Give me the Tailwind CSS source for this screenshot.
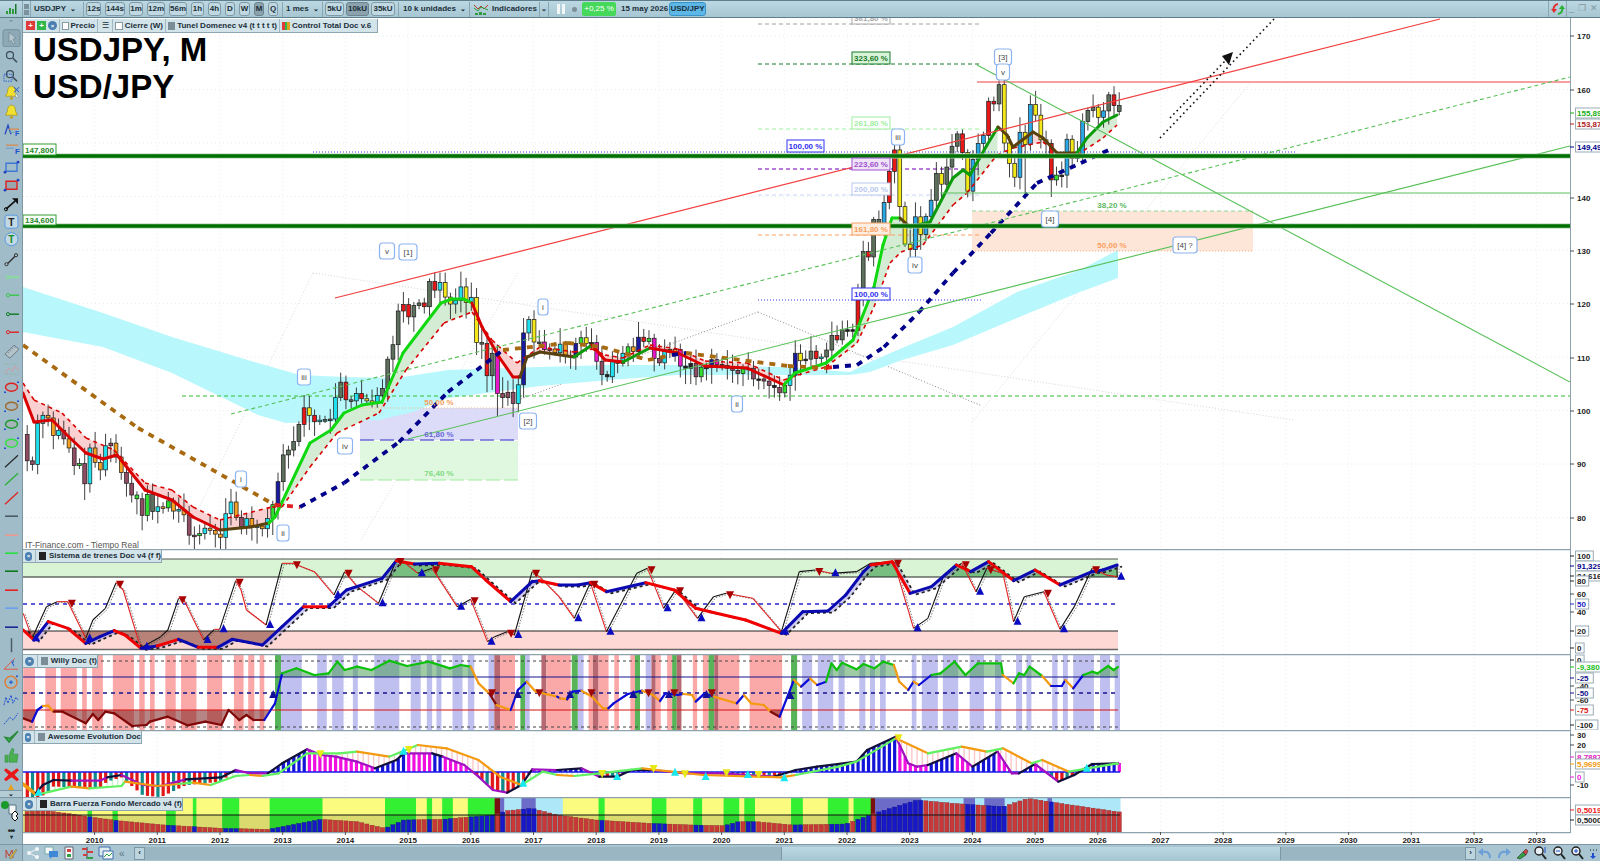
<!DOCTYPE html>
<html lang="en">
  <head>
    <meta charset="UTF-8" />
    <title>USDJPY, M</title>
    <script src="https://cdn.jsdelivr.net/npm/@tailwindcss/browser@4"></script>
  </head>
  <body class="h-[861px] w-[1600px] overflow-hidden whitespace-nowrap bg-white font-['Liberation_Sans',sans-serif] text-[8px] font-bold text-[#1c2f3a]">
    <!-- top toolbar -->
    <div class="flex h-[18px] items-center border-y border-[#5f7e8e] bg-gradient-to-b from-[#bcd8e2] to-[#a6c6d2]">
      <div class="flex h-full w-[23px] items-center justify-center border-r border-[#8aa6b3]">
        <svg class="h-[12px] w-[12px]" viewBox="0 0 12 12"><path d="M1 8h2v3H1zM4 5h2v6H4zM7 6h2v5H7z" fill="#2d9a3c" /><path d="M10 1h1.5v10H10z" fill="#1d7a2c" /></svg>
      </div>
      <div class="flex h-full w-[8px] flex-col items-center justify-center gap-px border-r border-[#8aa6b3]">
        <span class="h-[5px] w-[5px] bg-[#7b929d]"></span><span class="h-[5px] w-[5px] bg-[#7b929d]"></span>
      </div>
      <div class="ml-[3px] flex w-[43px] items-center gap-1">USDJPY <span class="text-[7px]">⌄</span></div>
      <div class="ml-[6px] flex h-[15px] items-center gap-1 border-l border-[#8aa6b3] pl-[2px]">
        <button class="h-[14px] w-[15px] rounded-[3px] border border-[#7f9aa6] bg-[#bfd8e1]">12s</button>
        <button class="h-[14px] w-[20px] rounded-[3px] border border-[#7f9aa6] bg-[#bfd8e1]">144s</button>
        <button class="h-[14px] w-[14px] rounded-[3px] border border-[#7f9aa6] bg-[#bfd8e1]">1m</button>
        <button class="h-[14px] w-[18px] rounded-[3px] border border-[#7f9aa6] bg-[#bfd8e1]">12m</button>
        <button class="h-[14px] w-[18px] rounded-[3px] border border-[#7f9aa6] bg-[#bfd8e1]">56m</button>
        <button class="h-[14px] w-[13px] rounded-[3px] border border-[#7f9aa6] bg-[#bfd8e1]">1h</button>
        <button class="h-[14px] w-[13px] rounded-[3px] border border-[#7f9aa6] bg-[#bfd8e1]">4h</button>
        <button class="h-[14px] w-[10px] rounded-[3px] border border-[#7f9aa6] bg-[#bfd8e1]">D</button>
        <button class="h-[14px] w-[11px] rounded-[3px] border border-[#7f9aa6] bg-[#bfd8e1]">W</button>
        <button class="h-[14px] w-[10px] rounded-[3px] border border-[#6b8490] bg-[#8ba2ad]">M</button>
        <button class="h-[14px] w-[10px] rounded-[3px] border border-[#7f9aa6] bg-[#bfd8e1]">Q</button>
      </div>
      <div class="ml-[4px] flex h-[15px] w-[36px] items-center gap-1 border-l border-[#8aa6b3] pl-[3px]">1 mes <span class="text-[7px]">⌄</span></div>
      <div class="ml-[4px] flex h-[15px] items-center gap-[2px] border-l border-[#8aa6b3] pl-[2px]">
        <button class="h-[14px] w-[19px] rounded-[3px] border border-[#7f9aa6] bg-[#bfd8e1]">5kU</button>
        <button class="h-[14px] w-[23px] rounded-[3px] border border-[#6b8490] bg-[#8ba2ad]">10kU</button>
        <button class="h-[14px] w-[24px] rounded-[3px] border border-[#7f9aa6] bg-[#bfd8e1]">35kU</button>
      </div>
      <div class="ml-[3px] flex h-[15px] w-[71px] items-center gap-1 border-l border-[#8aa6b3] pl-[4px]">10 k unidades <span class="text-[7px]">⌄</span></div>
      <div class="flex h-[15px] items-center gap-[3px] border-l border-[#8aa6b3] pl-[3px]">
        <svg class="h-[14px] w-[16px]" viewBox="0 0 16 14"><path d="M1 3l4 4 3-3 3 3 4-4" fill="none" stroke="#c0392b" /><path d="M1 6l4 3 3-4 7 3" fill="none" stroke="#2d9a3c" /><path d="M2 11h3v2H2zM6 10h3v3H6zM10 11h3v2h-3z" fill="#2d9a3c" /></svg>
        <span class="w-[47px]">Indicadores</span>
      </div>
      <div class="flex h-[15px] w-[10px] items-center justify-center border-x border-[#8aa6b3] text-[7px]">⌄</div>
      <div class="ml-[8px] flex h-[10px] w-[8px] justify-between">
        <span class="w-[3px] bg-[#f2f6f7]"></span><span class="w-[3px] bg-[#f2f6f7]"></span>
      </div>
      <span class="ml-[7px] h-[5px] w-[5px] rounded-full bg-[#7e8f98]"></span>
      <div class="ml-[5px] flex h-[14px] w-[34px] items-center justify-center rounded-[2px] bg-[#46d85a] font-normal text-white">+0,25 %</div>
      <span class="ml-[5px] w-[45px]">15 may 2026</span>
      <div class="ml-[3px] flex h-[14px] w-[37px] items-center justify-center rounded-[3px] border border-[#3a93c8] bg-[#5cb6e6]">USD/JPY</div>
      <div class="ml-auto flex h-full items-center">
        <div class="flex h-full w-[19px] items-center justify-center border-x border-[#8aa6b3]">
          <svg class="h-[14px] w-[14px]" viewBox="0 0 14 14"><path d="M7 2A5 5 0 0 0 3 9" fill="none" stroke="#e03030" stroke-width="2" /><path d="M0 7l3 4 3-4z" fill="#e03030" /><path d="M7 12a5 5 0 0 0 4-7" fill="none" stroke="#28b030" stroke-width="2" /><path d="M8 7l3-4 3 4z" fill="#28b030" /></svg>
        </div>
        <div class="flex w-[33px] items-center justify-around text-[9px] font-normal text-[#8298a3]"><span>_</span><span>❐</span><span>✕</span></div>
      </div>
    </div>

    <div class="flex h-[826px]">
      <!-- drawing tools -->
      <div class="flex w-[23px] shrink-0 flex-col border-r border-[#7d97a4] bg-[#a0bcc9]">
        <div class="flex h-[11px] items-center justify-center text-[7px] text-[#6d8794]">⌃</div>
        <div id="rail" class="flex flex-col"></div>
        <div class="flex h-[7px] justify-center overflow-hidden">
          <svg class="h-[7px] w-[10px]" viewBox="0 0 10 7"><path d="M5 1L2 7h6z" fill="#e8a020" /></svg>
        </div>
        <div class="flex h-[8px] items-center justify-center border-y border-[#7d97a4] bg-[#b4ccd6] text-[7px]">⌄</div>
        <div class="flex flex-1 flex-col items-center pt-[2px]">
          <svg class="h-[24px] w-[22px]" viewBox="0 0 22 24"><circle cx="5" cy="5" r="4" fill="#1a9a2a" /><path d="M9 5h7v9H9z" fill="#f4f7f8" stroke="#55707c" /><path d="M12 14l3-3 3 3-2 2 2 2-3 3-3-3z" fill="#f4f7f8" stroke="#111" /></svg>
          <div class="mt-[3px] text-[9px] leading-[8px] tracking-[-1px] text-[#222]">•••</div>
          <div class="text-[6px] leading-[5px]">▾</div>
        </div>
      </div>

      <!-- charts -->
      <div class="flex w-[1577px] flex-col">
        <div class="relative flex h-[531px]">
          <svg id="main" class="h-[531px] w-[1547px]" viewBox="23 18 1547 531"></svg>
          <svg id="mainAxis" class="h-[531px] w-[30px]" viewBox="1570 18 30 531"></svg>
          <!-- legend bar -->
          <div class="absolute left-0 top-px flex h-[14px] w-[355px] items-center border-b border-r border-[#8ea6b2] bg-[#d2e3ea]">
            <span class="ml-[3px] flex h-[9px] w-[9px] items-center justify-center bg-[#e03a3a] text-[8px] leading-none text-white">+</span>
            <span class="ml-[2px] flex h-[9px] w-[9px] items-center justify-center bg-[#2fb84a] text-[8px] leading-none text-white">+</span>
            <span class="ml-[2px] flex h-[9px] w-[9px] items-center justify-center rounded-full bg-[#4a7fb0] text-[6px] leading-none text-white">×</span>
            <span class="ml-[2px] flex h-full w-[39px] items-center gap-[2px] border-x border-[#a3b8c2] px-[2px]"><span class="h-[8px] w-[8px] border border-[#8a9aa3] bg-white"></span>Precio</span>
            <span class="flex h-full w-[15px] items-center justify-center border-r border-[#a3b8c2] font-normal">☰</span>
            <span class="flex h-full w-[53px] items-center gap-[2px] border-r border-[#a3b8c2] px-[2px]"><span class="h-[8px] w-[8px] border border-[#8a9aa3] bg-white"></span>Cierre (W)</span>
            <span class="flex h-full w-[114px] items-center gap-[2px] border-r border-[#a3b8c2] px-[2px]"><span class="h-[8px] w-[8px] bg-[#7b8d96]"></span>Tunel Domenec v4 (t t t t t)</span>
            <span class="flex h-full w-[96px] items-center gap-[2px] px-[2px]"><span class="flex h-[8px] w-[8px]"><span class="w-1/3 bg-[#e03a3a]"></span><span class="w-1/3 bg-[#2fb84a]"></span><span class="w-1/3 bg-[#e0a020]"></span></span>Control Total Doc v.6</span>
          </div>
          <div class="absolute left-[10px] top-[13px] text-[33px] leading-[37px] text-black">USDJPY, M<br />USD/JPY</div>
        </div>
        <div class="relative flex h-[105px]">
          <svg id="p1" class="h-[105px] w-[1547px]" viewBox="23 549 1547 105"></svg>
          <svg id="p1Axis" class="h-[105px] w-[30px]" viewBox="1570 549 30 105"></svg>
          <div class="absolute left-0 top-[1px] flex h-[13px] w-[139px] items-center border-b border-r border-[#8ea6b2] bg-[#d2e3ea]">
            <span class="ml-[2px] flex h-[9px] w-[9px] items-center justify-center rounded-full bg-[#4a7fb0] text-[6px] leading-none text-white">×</span>
            <span class="ml-[3px] flex h-full items-center gap-[3px] border-l border-[#a3b8c2] pl-[3px]"><span class="h-[8px] w-[7px] bg-[#222]"></span>Sistema de trenes Doc v4 (f f)</span>
          </div>
        </div>
        <div class="relative flex h-[76px]">
          <svg id="p2" class="h-[76px] w-[1547px]" viewBox="23 654 1547 76"></svg>
          <svg id="p2Axis" class="h-[76px] w-[30px]" viewBox="1570 654 30 76"></svg>
          <div class="absolute left-0 top-[1px] flex h-[13px] w-[75px] items-center border-b border-r border-[#8ea6b2] bg-[#d2e3ea]">
            <span class="ml-[2px] flex h-[9px] w-[9px] items-center justify-center rounded-full bg-[#4a7fb0] text-[6px] leading-none text-white">×</span>
            <span class="ml-[3px] flex h-full items-center gap-[3px] border-l border-[#a3b8c2] pl-[3px]"><span class="h-[8px] w-[7px] bg-[#7b8d96]"></span>Willy Doc (t)</span>
          </div>
        </div>
        <div class="relative flex h-[67px]">
          <svg id="p3" class="h-[67px] w-[1547px]" viewBox="23 730 1547 67"></svg>
          <svg id="p3Axis" class="h-[67px] w-[30px]" viewBox="1570 730 30 67"></svg>
          <div class="absolute left-0 top-[1px] flex h-[13px] w-[119px] items-center border-b border-r border-[#8ea6b2] bg-[#d2e3ea]">
            <span class="ml-[2px] flex h-[9px] w-[9px] items-center justify-center rounded-full bg-[#4a7fb0] text-[6px] leading-none text-white">×</span>
            <span class="ml-[3px] flex h-full items-center gap-[3px] border-l border-[#a3b8c2] pl-[3px]"><span class="h-[8px] w-[7px] bg-[#7b8d96]"></span>Awesome Evolution Doc</span>
          </div>
        </div>
        <div class="relative flex h-[35px]">
          <svg id="p4" class="h-[35px] w-[1547px]" viewBox="23 797 1547 35"></svg>
          <svg id="p4Axis" class="h-[35px] w-[30px]" viewBox="1570 797 30 35"></svg>
          <div class="absolute left-0 top-[1px] flex h-[13px] w-[160px] items-center border-b border-r border-[#8ea6b2] bg-[#d2e3ea]">
            <span class="ml-[2px] flex h-[9px] w-[9px] items-center justify-center rounded-full bg-[#4a7fb0] text-[6px] leading-none text-white">×</span>
            <span class="ml-[3px] flex h-full items-center gap-[3px] border-l border-[#a3b8c2] pl-[3px]"><span class="h-[8px] w-[7px] bg-[#222]"></span>Barra Fuerza Fondo Mercado v4 (f)</span>
          </div>
        </div>
        <svg id="dates" class="h-[12px] w-[1577px]" viewBox="23 832 1577 12"></svg>
      </div>
    </div>

    <!-- bottom bar -->
    <div class="flex h-[17px] items-center border-t border-[#7d97a4] bg-[#a9c5d1]">
      <div class="flex h-full w-[23px] items-center justify-center border-r border-[#7d97a4] bg-[#9db9c6]">
        <svg class="h-[13px] w-[13px]" viewBox="0 0 13 13"><path d="M1 11V3l3 6 3-6 1 8" fill="none" stroke="#c04030" /><path d="M4 11L11 2l1 1-6 9z" fill="#e0b030" stroke="#55707c" stroke-width=".5" /></svg>
      </div>
      <div class="flex w-[111px] items-center">
        <svg class="ml-[3px] h-[14px] w-[15px]" viewBox="0 0 15 14"><circle cx="3" cy="7" r="2" fill="#f4f7f8" /><circle cx="11" cy="3" r="2" fill="#f4f7f8" /><circle cx="11" cy="11" r="2" fill="#f4f7f8" /><path d="M3 7l8-4M3 7l8 4" stroke="#f4f7f8" /></svg>
        <svg class="ml-[3px] h-[14px] w-[15px]" viewBox="0 0 15 14"><path d="M1 1h8v7H1z" fill="#f4f7f8" stroke="#7aa" /><path d="M5 5h9v6H8l-2 2v-2H5z" fill="#3f88d8" /></svg>
        <svg class="ml-[3px] h-[14px] w-[15px]" viewBox="0 0 15 14"><path d="M3 1h8v12H3z" fill="#f4f7f8" stroke="#667" /><path d="M5 3h4v3H5z" fill="#d04040" /><path d="M5 8h4v3H5z" fill="#30a040" /></svg>
        <svg class="ml-[3px] h-[14px] w-[15px]" viewBox="0 0 15 14"><path d="M7 1v12" stroke="#445" /><path d="M2 2h5v2H2zM7 5h6v2H7zM3 8h4v2H3z" fill="#d04040" /><path d="M7 11h6v2H7z" fill="#30a040" /></svg>
        <svg class="ml-[3px] h-[14px] w-[16px]" viewBox="0 0 16 14"><path d="M1 1h11v9H1z" fill="#dfe9ee" stroke="#3f6fb0" /><path d="M5 5h10v8H5z" fill="#f4f7f8" stroke="#3f6fb0" /><path d="M6 11l3-3 2 2 3-3" fill="none" stroke="#30a040" /></svg>
        <span class="ml-[5px] text-[10px] font-normal text-[#5c7583]">«</span>
      </div>
      <div class="flex h-[13px] w-[11px] items-center justify-center border border-[#7d97a4] bg-[#bcd4de] text-[8px]">‹</div>
      <div class="h-[13px] w-[636px] bg-[#9ab6c3]"></div>
      <div class="h-[13px] w-[499px] border-l border-[#7d97a4] bg-gradient-to-b from-[#bcd8e2] to-[#a6c6d2]"></div>
      <div class="h-[13px] w-[185px] border-l border-[#7d97a4] bg-[#9ab6c3]"></div>
      <div class="flex h-[13px] w-[11px] items-center justify-center border border-[#7d97a4] bg-[#bcd4de] text-[8px]">›</div>
      <div class="ml-auto flex w-[124px] items-center justify-around">
        <svg class="h-[13px] w-[14px]" viewBox="0 0 14 13"><path d="M12 11C12 5 8 4 4 5" fill="none" stroke="#6c9ed8" stroke-width="2" /><path d="M5 1L0 5l5 4z" fill="#6c9ed8" /></svg>
        <svg class="h-[13px] w-[14px]" viewBox="0 0 14 13"><path d="M2 11C2 5 6 4 10 5" fill="none" stroke="#6c9ed8" stroke-width="2" /><path d="M9 1l5 4-5 4z" fill="#6c9ed8" /></svg>
        <svg class="h-[13px] w-[14px]" viewBox="0 0 14 13"><path d="M2 11l6-6 3 3-6 4z" fill="#30a040" stroke="#333" stroke-width=".6" /><path d="M8 5l3-3 2 2-2 4z" fill="#d04040" stroke="#333" stroke-width=".6" /></svg>
        <svg class="h-[14px] w-[14px]" viewBox="0 0 14 14"><circle cx="6" cy="5" r="4" fill="#e8f0f4" stroke="#222" stroke-width="1.4" /><path d="M9 8l4 5" stroke="#222" stroke-width="2" /><path d="M12 1v6" stroke="#2050d0" /></svg>
        <svg class="h-[14px] w-[14px]" viewBox="0 0 14 14"><circle cx="6" cy="5" r="4" fill="#e8f0f4" stroke="#222" stroke-width="1.4" /><path d="M9 8l4 5" stroke="#222" stroke-width="2" /><path d="M4 5h4" stroke="#2050d0" /></svg>
        <svg class="h-[14px] w-[14px]" viewBox="0 0 14 14"><circle cx="6" cy="5" r="4" fill="#e8f0f4" stroke="#222" stroke-width="1.4" /><path d="M9 8l4 5" stroke="#222" stroke-width="2" /><path d="M4 5h4M6 3v4" stroke="#2050d0" /></svg>
        <svg class="h-[14px] w-[9px]" viewBox="0 0 9 14"><path d="M1 4h1M4 4h1M7 4h1" stroke="#222" /><path d="M4 7v4" stroke="#2050d0" stroke-width="2" /><path d="M1 10h6l-3 3z" fill="#2050d0" /></svg>
      </div>
    </div>

    <script>
      // rail icons, top to bottom, 18.4px apart
      const slash = (c) => `<path d="M5 15L18 3" stroke="${c}" stroke-width="1.2"/>`;
      const hline = (c) => `<path d="M5 9h13" stroke="${c}" stroke-width="1.6"/>`;
      const pin = (c) => `<circle cx="8" cy="9" r="1.6" fill="none" stroke="${c}"/><path d="M10 9h9" stroke="${c}" stroke-width="1.4"/>`;
      const oval = (c, f) => `<ellipse cx="11.5" cy="9" rx="6" ry="4" fill="${f}" stroke="${c}" stroke-width="1.4"/><path d="M4 14h2M17 4h2" stroke="#2050d0" stroke-width="1.5"/>`;
      const lens = `<circle cx="10" cy="8" r="3.5" fill="none" stroke="#3c4c55" stroke-width="1.2"/><path d="M13 11l4 4" stroke="#3c4c55" stroke-width="1.6"/>`;
      const bell = `<path d="M11.5 2c-3 0-4 3-4 6l-2 4h12l-2-4c0-3-1-6-4-6z" fill="#f2e030" stroke="#a09020" stroke-width=".7"/><circle cx="11.5" cy="14" r="1.5" fill="#c0a020"/>`;
      const railIcons = [
        `<rect x="3" y="0.5" width="17" height="17" rx="2" fill="#8ea9b6" stroke="#758f9c"/><path d="M9 3l7 6-3 1 2 4-2 1-2-4-2 2z" fill="#b6c6ce" stroke="#66808c" stroke-width=".6"/>`,
        lens,
        lens + `<rect x="4" y="8" width="8" height="7" fill="none" stroke="#2a60c8" stroke-dasharray="1.5 1"/>`,
        bell + `<path d="M14 3l5 5M19 3l-5 5" stroke="#2050d0"/><path d="M15 8l4 5h-3z" fill="#f4f7f8" stroke="#66808c" stroke-width=".5"/>`,
        bell,
        `<path d="M5 13l3-9 3 9" fill="none" stroke="#2040c0" stroke-width="1.2"/><path d="M9 8h10" stroke="#d09060" stroke-width="1.5"/><path d="M9 11h6" stroke="#6aa" /><text x="15" y="15" font-size="7" fill="#2050d0">F</text>`,
        `<path d="M6 6h12" stroke="#d09060" stroke-width="1.5"/><path d="M6 9h8" stroke="#6a9ad0"/><text x="15" y="15" font-size="8" fill="#2050d0">F</text>`,
        `<path d="M6 5h11v8H6z" fill="none" stroke="#3f78d8" stroke-width="1.4"/><circle cx="5" cy="14" r="1.4" fill="#2040c0"/><circle cx="18" cy="4" r="1.4" fill="#2040c0"/>`,
        `<path d="M6 5h11v8H6z" fill="#9aa5ad" stroke="#e02020" stroke-width="1.4"/><circle cx="5" cy="14" r="1.4" fill="#2040c0"/><circle cx="18" cy="4" r="1.4" fill="#2040c0"/>`,
        `<path d="M6 14L15 6" stroke="#111" stroke-width="1.6"/><path d="M12 3h6v6z" fill="#111"/><circle cx="6" cy="14" r="1.6" fill="none" stroke="#111"/>`,
        `<rect x="5" y="2" width="13" height="13" rx="2.5" fill="#c2d8e2" stroke="#5a9ae0"/><text x="8.3" y="12.5" font-size="10" fill="#222">T</text>`,
        `<circle cx="11.5" cy="8" r="6.5" fill="#c2d8e2" stroke="#5a9ae0"/><text x="8.3" y="12" font-size="10" fill="#1a8a2a">T</text>`,
        `<circle cx="6.5" cy="14" r="1.6" fill="none" stroke="#333"/><circle cx="16" cy="5" r="1.6" fill="none" stroke="#333"/><path d="M8 13l7-7" stroke="#333" stroke-width="1.4"/>`,
        pin("#7fe88a"), pin("#36c648"), pin("#0e7a1c"), pin("#e02020"),
        `<path d="M5 12l9-9 5 4-9 9z" fill="#b4c2ca" stroke="#6a7c86"/><path d="M8 10l1 1M10 8l1 1M12 6l1 1M14 4.500l1 1" stroke="#6a7c86"/>`,
        `<path d="M5 4h14M5 14h14" stroke="#8ab09a" stroke-dasharray="1 1"/><path d="M5 13l4-5 3 3 3-5 4 5" fill="none" stroke="#d09aa0"/>`,
        oval("#e02020", "#a8b4bc"), oval("#9a6a30", "#a8b4bc"), oval("#1a9a2a", "#a8b4bc"), oval("#2ee040", "#a8b4bc"),
        slash("#2a2a2a"), slash("#28b030"), slash("#e02020"),
        hline("#4c5c66"), hline("#ea9a90"), hline("#28e040"), hline("#0c7a1a"), hline("#e82020"), hline("#6aa0f0"), hline("#1a2a90"),
        `<path d="M11.500 2v14" stroke="#4c5c66" stroke-width="1.5"/>`,
        `<path d="M4 15L15 4M4 15h14" stroke="#e05a40"/><text x="11" y="12" font-size="8" fill="#2050d0">°</text><path d="M12 8l2 4" stroke="#2050d0"/>`,
        `<circle cx="11" cy="9" r="6" fill="none" stroke="#e07a30" stroke-width="1.3"/><path d="M9 9h4M11 7v4" stroke="#2050d0"/><circle cx="17" cy="3" r="1" fill="#2050d0"/>`,
        `<path d="M4 14l2-8 2 6 3-8 2 8 3-6 2 3" fill="none" stroke="#2050d0" stroke-width="1" stroke-dasharray="2 1"/>`,
        `<path d="M4 15l6-7 3 3 5-7" fill="none" stroke="#2050d0" stroke-width="1" stroke-dasharray="2 1"/>`,
        `<path d="M5 9l4 5L18 3l-8 7z" fill="#38b048" stroke="#2a8a38" stroke-width="1.4"/>`,
        `<path d="M5 9h3v7H5zM9 9l3-7 2 1-1 5h5l-1 8H9z" fill="#4ab050" stroke="#2a8a38" stroke-width=".5"/>`,
        `<path d="M6 3l5.500 4L17 3l2 2-4.500 4.500L19 14l-2 2-5.500-4L6 16l-2-2 4.500-4.500L4 5z" fill="#e81818"/>`,
      ];
      document.getElementById("rail").innerHTML = railIcons
        .map((i) => `<svg class="h-[18.4px] w-[23px]" viewBox="0 0 23 18">${i}</svg>`)
        .join("");

      // ---- helpers
      const yearX = (y) => 94.6 + (y - 2010) * 62.7;
      const monthX = (i) => 27.2 + 5.225 * i;
      const py = (p) => 36 + (170 - p) * 5.35;
      const poly = (a) => a.map((p) => p[0].toFixed(1) + "," + p[1].toFixed(1)).join(" ");
      const line = (x1, y1, x2, y2, c, w = 1, dash = "") =>
        `<line x1="${x1}" y1="${y1}" x2="${x2}" y2="${y2}" stroke="${c}" stroke-width="${w}" ${dash ? `stroke-dasharray="${dash}"` : ""}/>`;
      const z6 = (a) => a.map((p) => [p[0] / 2.8, 540 + p[1] / 3, p[2]]);
      const z7 = (a) => a.map((p) => [560 + p[0] / 2.8, 540 + p[1] / 3, p[2]]);
      const interp = (a, x) => {
        for (let i = 1; i < a.length; i++) {
          if (x <= a[i][0]) {
            const t = (x - a[i - 1][0]) / (a[i][0] - a[i - 1][0] || 1);
            return a[i - 1][1] + t * (a[i][1] - a[i - 1][1]);
          }
        }
        return a[a.length - 1][1];
      };
      // one polyline, colour per segment; a point with no colour keeps the last one
      const colored = (a, colors, w, dash = "") => {
        let out = "", cur = null;
        for (let i = 0; i < a.length - 1; i++) {
          cur = a[i][2] || cur;
          out += `<line x1="${a[i][0]}" y1="${a[i][1]}" x2="${a[i + 1][0]}" y2="${a[i + 1][1]}" stroke="${colors[cur]}" stroke-width="${w}" stroke-linecap="${dash ? "butt" : "round"}" ${dash ? `stroke-dasharray="${dash}"` : ""}/>`;
        }
        return out;
      };
      const triDown = (x, y, c, s = 4) => `<polygon points="${x - s},${y - s} ${x + s},${y - s} ${x},${y + s}" fill="${c}"/>`;
      const triUp = (x, y, c, s = 4) => `<polygon points="${x - s},${y + s} ${x + s},${y + s} ${x},${y - s}" fill="${c}"/>`;
      const grid = (top, bottom) => {
        let g = "";
        for (let y = 2010; y <= 2033; y++) g += line(yearX(y), top, yearX(y), bottom, "#e4e8ea", 0.8, "1 3");
        return g;
      };
      const axisText = (items, top, bottom) => {
        let s = line(1570.5, top, 1570.5, bottom, "#8ea2ad", 1);
        for (const [y, label, color, boxed] of items) {
          s += line(1570, y, 1574, y, color || "#44525a", 1);
          if (boxed) {
            const w = label.length * 4.6 + 4;
            s += `<rect x="1575.500" y="${y - 5}" width="${w}" height="10" fill="#fff" stroke="#9aabb4"/>`;
          }
          s += `<text x="1577" y="${y + 3}" font-size="8" font-weight="700" fill="${color || "#222"}">${label}</text>`;
        }
        return s;
      };

      // ---- monthly USD/JPY from Dec 2008
      const closes = [90.6,
        89.9,97.6,99.1,98.6,95.3,96.3,94.7,93,89.7,90.1,86.3,93,
        90.3,88.9,93.4,93.9,91.3,88.4,86.4,84.2,83.5,80.4,84.3,81.1,
        82,81.8,83.1,81.2,81.5,80.5,76.7,76.6,77,78,77.6,76.9,
        76.3,80.7,82.9,80,78.3,79.8,78.1,78.4,77.9,79.8,82.4,86.7,
        91.7,92.6,94.2,97.4,100.5,99.1,97.9,98.2,98.3,98.4,102.4,105.3,
        102,101.8,103.2,102.2,101.8,101.3,102.8,104.1,109.6,112.3,118.6,119.8,
        117.5,119.6,120.1,119.4,124.1,122.5,123.9,121.2,119.9,120.6,123.1,120.2,
        121.1,112.7,112.5,106.5,110.7,103.2,102.4,103.4,101.3,104.8,114.5,117,
        112.8,112.8,111.4,111.5,110.8,112.4,110.3,110,112.5,113.6,112.5,112.7,
        109.2,106.7,106.3,109.3,108.8,110.7,111.9,111,113.7,112.9,113.5,109.7,
        108.9,111.4,110.9,111.4,108.3,107.9,108.8,106.3,108.1,108,109.5,108.6,
        108.4,107.9,107.5,106.9,107.8,107.9,105.9,105.9,105.5,104.7,104.3,103.3,
        104.7,106.6,110.7,109.3,109.6,111.1,109.7,110,111.3,114,113.2,115.1,
        115.1,115,121.7,129.7,128.7,135.7,133.3,138.9,144.7,148.7,138.1,131.1,
        130.1,136.2,132.9,136.3,139.3,144.3,142.3,145.5,149.4,151.7,148.2,141,
        146.9,149.9,151.4,157.8,157.3,160.9,150,146.2,143.6,152,149.7,157.2,
        155.2,150.6,149.9,143.1,144,144,150.7,147.1,147.9,154,156.1,156.7,
        154.8,156,159,157,155.9];
      const candleCodes = "ppccoocpoplp" + "coocpoopplpl" + "gcolocopplco" + "ooccopcococl" + "nggggryrcggc" + "grgcryycgggg" +
        "rrggrgrcyycc" + "ycygrgmpppcn" + "cygmpocoknly" + "kmpkcoclonrl" + "mpcoomkkplkn" + "mpppplkpkppk" + "plcnykgrcggr" +
        "gkkrgrggurry" + "yyuyuugygggr" + "yuuurrgyyyuy" + "uyyyrlkuyuug" + "gyugrg";
      const candleFill = { p: "#8f4c62", c: "#20e2ee", o: "#f5a020", l: "#2fe02f", g: "#5d705d", n: "#1a1aa0", r: "#e81818", y: "#f4e818", m: "#e818c8", k: "#222", u: "#2aa8e6" };
      let seed = 7;
      const rnd = () => (seed = (seed * 9301 + 49297) % 233280) / 233280;
      const wickOverride = { 90: [null, 99], 187: [161.9, null], 196: [null, 139.9], 78: [125.9, null], 191: [null, 139.6], 167: [151.9, null] };
      let candles = "";
      closes.forEach((c, i) => {
        const o = i ? closes[i - 1] : 95.5;
        const x = monthX(i);
        let hi = Math.max(o, c) + 0.5 + rnd() * 2.6;
        let lo = Math.min(o, c) - 0.5 - rnd() * 2.6;
        if (wickOverride[i]) {
          hi = wickOverride[i][0] || hi;
          lo = wickOverride[i][1] || lo;
        }
        candles += line(x, py(hi), x, py(lo), "#2a2a2a", 0.9);
        const top = py(Math.max(o, c));
        const h = Math.max(1.6, py(Math.min(o, c)) - top);
        candles += `<rect x="${x - 1.9}" y="${top}" width="3.8" height="${h}" fill="${candleFill[candleCodes[i]]}" stroke="#1a1a1a" stroke-width=".7"/>`;
      });

      // ---- tunnel lines
      const fast = [[23,393,"R"],[34,422],[52,420],[69,437],[86,453],[103,459],[117,455],[145,490],[172,500],[193,517],[220,530,"B"],[250,527],[269,523,"G"],[275,517],[310,443],[331,430],[344,413],[362,405],[382,402],[403,353],[441,303],[452,299],[464,299],[472,303,"R"],[482,327],[499,357],[513,377],[520,377,"B"],[527,357],[540,352],[574,357,"D"],[592,345,"R"],[605,360],[623,362,"D"],[650,348,"R"],[678,353],[705,366],[747,368],[784,385,"G"],[795,373],[826,363],[853,340],[874,287],[883,245],[892,218],[900,218,"B"],[910,227,"D"],[930,222],[953,178],[963,170],[970,175],[987,145],[998,127,"B"],[1007,135],[1013,147],[1033,132],[1043,138],[1057,153],[1077,153,"D"],[1087,138],[1103,122],[1117,115]];
      const slow = [[23,383],[34,400],[62,413],[86,438],[114,450],[145,483],[172,490],[193,507],[220,520],[272,507],[282,507],[310,467],[337,433],[379,413],[406,370],[444,323],[472,312],[492,340],[517,363],[540,347],[574,352],[592,349],[605,355],[623,358],[650,345],[678,349],[705,361],[747,363],[784,380],[798,375],[826,367],[857,343],[874,307],[890,263],[901,252],[923,245],[953,205],[967,193],[997,155],[1013,148],[1043,142],[1060,155],[1077,155],[1103,138],[1117,125]];
      const tunnelFill = (x0, x1, c) => {
        const a = fast.filter((p) => p[0] >= x0 && p[0] <= x1);
        const b = slow.filter((p) => p[0] >= x0 && p[0] <= x1).reverse();
        return `<polygon points="${poly(a.concat(b))}" fill="${c}"/>`;
      };
      const longLine = [[23,345,"Br"],[138,428],[275,505,"Re"],[300,507,"N"],[344,483],[399,442],[448,392],[503,350,"Br"],[568,343],[602,347],[648,360],[672,355,"N"],[686,353,"Br"],[788,366],[826,368,"Re"],[833,367,"N"],[857,365],[884,347],[919,312],[953,273],[991,233],[1037,183],[1070,168],[1113,148]];
      const lineColors = { R: "#d80000", B: "#5a4210", G: "#10d810", D: "#0a9a0a", Br: "#a86a10", Re: "#e02020", N: "#00008b" };

      const cloud = [[23,287],[103,313],[172,337],[258,363],[300,375],[344,377],[396,378],[448,370],[540,367],[609,365],[678,365],[781,367],[850,372],[870,362],[902,348],[953,327],[1017,292],[1080,270],[1118,250],
        [1118,278],[1080,292],[1017,318],[953,345],[902,360],[870,372],[850,375],[791,375],[678,375],[609,380],[540,386],[448,398],[413,412],[379,420],[327,422],[286,423],[258,415],[172,373],[103,347],[23,332]];

      // ---- main chart
      const fibLabel = (x, y, w, text, c, bg = "#fff") =>
        `<rect x="${x}" y="${y - 6}" width="${w}" height="12" fill="${bg}" stroke="${c}"/><text x="${x + w / 2}" y="${y + 3}" font-size="8" font-weight="700" text-anchor="middle" fill="${c}">${text}</text>`;
      const wave = (cx, cy, text, w = 15) =>
        `<rect x="${cx - w / 2}" y="${cy - 8}" width="${w}" height="16" rx="3" fill="#fff" stroke="#8cb4f0" stroke-width="1.2"/><text x="${cx}" y="${cy + 3}" font-size="8" font-weight="400" text-anchor="middle" fill="#444">${text}</text>`;
      const pctText = (x, y, t, c) => `<text x="${x}" y="${y}" font-size="8" font-weight="700" text-anchor="middle" fill="${c}">${t}</text>`;

      let m = `<rect x="23" y="18" width="1547" height="531" fill="#fff"/>` + grid(18, 549);
      for (let p = 80; p <= 170; p += 10) m += line(23, py(p), 1570, py(p), "#e4e8ea", 0.8, "1 3");
      // faint fan and wave guides
      m += line(313, 273, 193, 520, "#dcdcdc", 1, "1 2") + line(313, 273, 1293, 420, "#d6d6d6", 1, "1 2");
      m += line(518, 273, 361, 540, "#dcdcdc", 1, "1 2") + line(972, 422, 1250, 83, "#dcdcdc", 1, "1 2");
      m += line(518, 400, 758, 312, "#8a8a8a", 1, "1 2") + line(758, 312, 982, 406, "#8a8a8a", 1, "1 2");
      // fib zones
      m += `<rect x="360" y="408" width="158" height="32" fill="#dcdcf8"/><rect x="360" y="441" width="158" height="39" fill="#dff8df"/>`;
      m += `<rect x="972" y="211" width="281" height="40" fill="#fde6d8"/>`;
      m += `<polygon points="${poly(cloud)}" fill="#b8f8fc"/>`;
      m += tunnelFill(23, 272, "#fbd0d0") + tunnelFill(272, 472, "#d4ecd4") + tunnelFill(472, 784, "#fbd0d0") + tunnelFill(784, 1000, "#d4ecd4") + tunnelFill(1000, 1080, "#fbd8d8") + tunnelFill(1077, 1118, "#d4ecd4");
      m += line(182, 396, 1570, 396, "#30c030", 1, "4 3");
      m += line(360, 408, 518, 408, "#f8b080", 1, "1 2") + line(360, 440, 518, 440, "#6a6ad8", 1.6, "14 6") + line(360, 480, 518, 480, "#a0eca0", 1, "14 4");
      m += line(972, 211, 1253, 211, "#8fd88f", 1.2, "4 3") + line(972, 251, 1253, 251, "#f8b080", 1, "1 2");
      m += line(758, 24, 982, 24, "#a0a0a0", 1, "4 3") + line(758, 64, 982, 64, "#1a7a2a", 1, "4 3") + line(758, 129, 982, 129, "#a0f0a0", 1, "4 3");
      m += line(758, 169, 982, 169, "#a050d0", 1.4, "4 3") + line(758, 195, 982, 195, "#c4d4f8", 1.2, "4 3") + line(758, 235, 982, 235, "#f8a060", 1, "4 3") + line(758, 300, 981, 300, "#3a3af0", 1, "1 2");
      m += line(313, 152, 1295, 152, "#3a3af0", 1, "1 2");
      m += candles;
      m += colored(slow.map((p, i) => [p[0], p[1], i ? null : "R"]), lineColors, 1.6, "4 4");
      m += colored(fast, lineColors, 3);
      m += colored(longLine, lineColors, 3.8, "6 6");
      // trend lines
      m += line(335, 298, 1440, 19, "#f04040", 1.2) + line(977, 82, 1570, 82, "#f04040", 1.2);
      m += line(231, 414, 1570, 77, "#58c058", 1.1, "4 3") + line(408, 439, 1570, 146, "#58c058", 1.1) + line(977, 65, 1570, 382, "#58c058", 1.1) + line(940, 193, 1570, 193, "#58c058", 1);
      m += line(23, 156, 1570, 156, "#a8cca8", 5) + line(23, 156, 1570, 156, "#007000", 3.4);
      m += line(23, 226, 1570, 226, "#a8cca8", 5) + line(23, 226, 1570, 226, "#007000", 3.4);
      m += line(1160, 138, 1275, 18, "#111", 1.6, "1.600 3.200") + line(1170, 118, 1226, 60, "#111", 1.6, "1.600 3.200");
      m += `<polygon points="1233,52 1222,56 1229,65" fill="#111"/>`;
      // tags
      m += `<rect x="23" y="144" width="33" height="11" fill="#fff" stroke="#30a030"/><text x="25" y="153" font-size="8" fill="#1f8a1f">147,800</text>`;
      m += `<rect x="23" y="215" width="33" height="10" fill="#fff" stroke="#30a030"/><text x="25" y="223" font-size="8" fill="#1f8a1f">134,600</text>`;
      m += fibLabel(852, 18, 38, "361,80 %", "#a8a8a8") + fibLabel(852, 58, 38, "323,60 %", "#1a7a2a", "#d8f4d8");
      m += fibLabel(852, 123, 38, "261,80 %", "#a0f0a0") + fibLabel(852, 164, 38, "223,60 %", "#a050d0", "#f0e4f8");
      m += fibLabel(852, 189, 38, "200,00 %", "#b8c8f0") + fibLabel(852, 229, 38, "161,80 %", "#f8a060", "#fdeee2");
      m += fibLabel(852, 294, 38, "100,00 %", "#3030f0") + fibLabel(787, 146, 37, "100,00 %", "#3030f0");
      m += pctText(439, 405, "50,00 %", "#f8a060") + pctText(439, 437, "61,80 %", "#6a6ad8") + pctText(439, 476, "76,40 %", "#80d880");
      m += pctText(1112, 208, "38,20 %", "#60b860") + pctText(1112, 248, "50,00 %", "#f8a060");
      m += wave(387, 251, "v") + wave(408, 252, "[1]", 18) + wave(304, 377, "iii", 13) + wave(345, 446, "iv") + wave(241, 479, "i", 11) + wave(283, 533, "ii", 12) + wave(528, 421, "[2]", 17);
      m += wave(543, 307, "i", 10) + wave(737, 404, "ii", 11) + wave(915, 265, "iv", 14) + wave(898, 137, "iii", 13) + wave(1003, 57, "[3]", 17) + wave(1003, 72, "v", 13) + wave(1050, 219, "[4]", 17) + wave(1185, 245, "[4] ?", 24);
      m += `<text x="25" y="548" font-size="8.500" font-weight="400" fill="#555">IT-Finance.com - Tiempo Real</text>`;
      document.getElementById("main").innerHTML = m;
      document.getElementById("mainAxis").innerHTML = axisText(
        [[36,"170"],[90,"160"],[198,"140"],[251,"130"],[304,"120"],[358,"110"],[411,"100"],[464,"90"],[518,"80"],
         [113,"155,89","#16b016",true],[124,"153,87","#b02020",true],[147,"149,49","#00008b",true]], 18, 549);

      // ---- trend system panel
      const thin = z6([[65,220],[90,295],[130,200],[160,185],[190,185],[240,295],[260,240],[295,205],[325,128],[345,150],[390,310],[400,320],[450,290],[470,270],[500,175],[515,180],[570,300],[600,268],[615,268],[660,122],[675,150],[690,210],[745,255],[790,70],[820,70],[880,95],[935,165],[965,95],[1000,140],[1060,190],[1110,60],[1125,62],[1170,100],[1210,85],[1280,200],[1318,178],[1365,305],[1385,290],[1420,275],[1440,285],[1490,95],[1510,110],[1565,170]])
        .concat(z7([[40,235],[85,128],[130,275],[215,100],[245,85],[290,205],[325,148],[385,235],[430,170],[465,160],[540,175],[620,275],[670,95],[715,90],[760,100],[830,95],[870,70],[935,65],[990,265],[1030,235],[1075,105],[1125,70],[1165,155],[1195,85],[1240,100],[1270,245],[1300,170],[1355,155],[1400,268],[1440,200],[1490,85],[1530,105],[1560,110]]));
      const thick = z6([[65,270,"r"],[95,300,"b"],[135,245,"r"],[190,265],[240,310,"b"],[280,290],[320,272,"r"],[350,285],[395,325,"b"],[440,318,"r"],[500,298,"b"],[555,322,"r"],[610,322,"b"],[650,298],[735,315],[790,260],[850,200,"r"],[920,200,"b"],[970,150],[1070,115],[1110,62,"r"],[1160,72,"b"],[1230,70,"r"],[1320,80],[1360,120],[1430,185,"b"],[1490,125],[1510,122,"r"],[1565,135,"b"]])
        .concat(z7([[50,135],[85,128,"r"],[130,155,"b"],[240,128,"r"],[320,150],[380,205],[420,215],[520,240],[620,280,"b"],[680,215],[750,213],[800,165],[850,95],[870,75,"r"],[930,65],[980,160,"b"],[1040,140],[1110,75,"r"],[1150,95,"b"],[1200,65,"r"],[1270,122,"b"],[1330,90,"r"],[1400,135,"b"],[1490,95],[1520,90],[1560,75]]));
      thin.push([1117, 566]);
      const thickDash = thick.map((p) => [p[0] + 5, p[1] + 1.5]);
      let p1 = `<rect x="23" y="549" width="1547" height="105" fill="#fff"/>` + grid(549, 654);
      p1 += `<defs><clipPath id="upper"><rect x="23" y="559" width="1095" height="18"/></clipPath><clipPath id="lower"><rect x="23" y="631" width="1095" height="18"/></clipPath></defs>`;
      p1 += `<rect x="23" y="559" width="1095" height="18" fill="#d8f4d4"/><rect x="23" y="631" width="1095" height="18" fill="#fdd8d4"/>`;
      const thickPts = poly(thick);
      p1 += `<polygon clip-path="url(#lower)" points="${thickPts} 1118,631 23,631" fill="#8a4a3a" fill-opacity=".6"/>`;
      p1 += `<polygon clip-path="url(#upper)" points="${thickPts} 1118,577 23,577" fill="#3a9a4a" fill-opacity=".6"/>`;
      p1 += `<polygon points="${poly(thick.concat(thickDash.slice().reverse()))}" fill="#a8a0e0" fill-opacity=".55"/>`;
      p1 += line(23, 549.5, 1570, 549.5, "#8ea2ad", 1.5);
      p1 += line(23, 559, 1118, 559, "#555", 1) + line(23, 577, 1118, 577, "#222", 1) + line(23, 604, 1118, 604, "#2424c8", 1.6, "4 4") + line(23, 631, 1118, 631, "#222", 1) + line(23, 649.5, 1118, 649.5, "#666", 1.6);
      p1 += `<polyline points="${poly(thin.map((p) => [p[0] + 2, p[1] + 1]))}" fill="none" stroke="#444" stroke-width=".7" stroke-dasharray="1.500 1.500"/>`;
      for (let i = 0; i < thin.length - 1; i++) {
        const up = thin[i + 1][1] < thin[i][1];
        p1 += line(thin[i][0], thin[i][1], thin[i + 1][0], thin[i + 1][1], up ? "#111" : "#e02020", 1.1);
      }
      p1 += `<polyline points="${poly(thickDash)}" fill="none" stroke="#222" stroke-width="1.800" stroke-dasharray="3 3"/>`;
      p1 += colored(thick, { r: "#f00000", b: "#0a0ab0" }, 3);
      for (let i = 1; i < thin.length - 1; i++) {
        const a = thin[i - 1][1], b = thin[i][1], c = thin[i + 1][1];
        if (b <= a && b < c) p1 += triDown(thin[i][0] + 4, b + 2, "#a80000", 4);
        if (b >= a && b > c) p1 += triUp(thin[i][0] + 4, b - 1, "#0a0ac0", 4);
      }
      document.getElementById("p1").innerHTML = p1;
      document.getElementById("p1Axis").innerHTML = axisText(
        [[556,"100","#222",true],[566,"91,329","#00008b",true],[576,"84,616","#222",true],[581,"80","#222",true],[594,"60"],[612,"40"],[604,"50","#2424c8",true],[631,"20","#222",true],[648,"0","#222",true]], 549, 654);

      // ---- willy panel
      const RED = "#fba8a8", LAV = "#c0c0f0", GRN = "#58b458", ROSE = "#b86870";
      const band = (a, b, c, off) => `<rect x="${off + a / 2.8}" y="655" width="${(b - a) / 2.8}" height="75" fill="${c}"/>`;
      const bands6 = [[65,98,RED],[127,157,RED],[170,215,RED],[230,243,RED],[258,288,RED],[316,375,RED],[390,405,RED],[420,433,RED],[463,492,RED],[507,550,RED],[580,622,RED],[655,682,RED],[695,712,RED],[727,740,RED],[770,787,GRN],[787,845,LAV],[888,915,LAV],[930,962,LAV],[988,1002,LAV],[1048,1118,LAV],[1150,1178,LAV],[1195,1210,LAV],[1222,1236,LAV],[1267,1295,LAV],[1310,1328,LAV],[1368,1384,LAV],[1384,1400,ROSE],[1400,1442,RED],[1457,1470,GRN],[1470,1483,LAV],[1516,1530,ROSE],[1530,1568,RED]];
      const bands7 = [[0,30,RED],[33,50,GRN],[50,66,LAV],[80,92,RED],[92,108,ROSE],[108,136,RED],[152,165,RED],[197,210,RED],[210,224,GRN],[240,256,LAV],[256,268,ROSE],[268,282,RED],[300,314,RED],[314,327,GRN],[327,340,ROSE],[372,384,RED],[400,416,RED],[416,432,GRN],[432,444,ROSE],[444,502,RED],[531,622,RED],[647,664,GRN],[678,706,LAV],[722,765,LAV],[780,797,LAV],[838,855,LAV],[868,882,LAV],[896,912,LAV],[985,998,LAV],[1013,1058,LAV],[1072,1115,LAV],[1147,1187,LAV],[1218,1236,LAV],[1277,1294,LAV],[1306,1320,LAV],[1378,1393,LAV],[1408,1422,LAV],[1437,1495,LAV],[1512,1540,LAV],[1553,1568,LAV]];
      const willy = z6([[65,535,"d"],[90,545,"b"],[105,510],[120,498,"o"],[135,497],[150,515,"d"],[175,515],[240,550],[260,522],[275,540],[295,515],[320,520],[370,558],[410,555],[420,545],[470,530],[525,556],[575,545],[620,555],[640,510],[670,540],[690,525],[710,540],[740,540,"b"],[770,490],[790,400,"g"],[830,385],[880,405],[920,400],[945,365],[965,390],[1000,380],[1040,390],[1090,362],[1140,378],[1200,365],[1260,385],[1290,375],[1318,380,"o"],[1340,430],[1370,460,"d"],[1390,495,"o"],[1430,510,"b"],[1450,450],[1475,425,"o"],[1500,455],[1560,470,"b"]])
        .concat(z7([[0,475,"o"],[20,478,"b"],[35,455],[60,452,"o"],[90,470],[120,505],[135,505,"b"],[150,490],[190,462],[230,452,"o"],[260,465],[280,483,"b"],[295,460],[330,465],[345,462,"o"],[370,465],[380,485,"b"],[405,460],[430,470,"o"],[495,490,"b"],[515,465,"o"],[535,490],[570,495],[590,515,"d"],[615,530,"b"],[655,420,"o"],[675,440,"b"],[700,415,"o"],[720,435,"b"],[745,425,"g"],[760,370],[775,390],[790,368],[830,388],[850,372],[880,385],[905,365],[935,375,"o"],[950,425],[975,450,"b"],[990,425,"o"],[1005,435,"b"],[1040,405,"g"],[1065,400],[1105,365],[1135,405],[1170,370],[1235,370],[1240,405,"o"],[1270,430,"g"],[1285,400],[1300,405],[1315,380],[1350,408,"o"],[1375,438,"b"],[1405,438],[1415,420,"o"],[1437,445,"b"],[1465,405,"g"],[1490,395],[1505,400],[1535,378],[1550,390]]));
      willy.push([1118, 667]);
      let p2 = `<rect x="23" y="654" width="1547" height="76" fill="#fff"/>` + grid(654, 730);
      p2 += bands6.map((b) => band(b[0], b[1], b[2], 0)).join("") + bands7.map((b) => band(b[0], b[1], b[2], 560)).join("");
      p2 += `<rect x="1115" y="655" width="5" height="75" fill="${LAV}"/>`;
      p2 += `<defs><clipPath id="wUp"><rect x="23" y="655" width="1095" height="22"/></clipPath><clipPath id="wDn"><rect x="23" y="710" width="1095" height="20"/></clipPath></defs>`;
      const wPts = poly(willy);
      p2 += `<polygon clip-path="url(#wUp)" points="${wPts} 1118,677 23,677" fill="#3f9a4a" fill-opacity=".5"/>`;
      p2 += `<polygon clip-path="url(#wDn)" points="${wPts} 1118,710 23,710" fill="#7a2020" fill-opacity=".55"/>`;
      p2 += line(23, 654.5, 1570, 654.5, "#8ea2ad", 1.5);
      p2 += line(23, 661, 1118, 661, "#444", 1, "3 3") + line(23, 677, 1118, 677, "#14148c", 1) + line(23, 693, 1118, 693, "#14148c", 1.4, "4 4") + line(23, 710, 1118, 710, "#d81010", 1) + line(23, 727, 1118, 727, "#444", 1, "3 3");
      p2 += colored(willy, { d: "#800808", b: "#0c0cd8", o: "#f49a10", g: "#0cc00c" }, 2.2);
      z6([[765,462],[1450,462]]).concat(z7([[28,462],[205,462],[305,462],[410,462],[645,465]])).forEach((t) => (p2 += triUp(t[0], t[1], "#10109a", 4)));
      z6([[1378,460],[1510,460]]).concat(z7([[88,460],[248,460],[320,460],[425,460]])).forEach((t) => (p2 += triDown(t[0], t[1], "#a00808", 4)));
      document.getElementById("p2").innerHTML = p2;
      document.getElementById("p2Axis").innerHTML = axisText(
        [[660,"0","#222",true],[686,"-40"],[700,"-60"],[667,"-9,3803","#18c018",true],[678,"-25","#14148c",true],[693,"-50","#14148c",true],[710,"-75","#d81010",true],[725,"-100","#222",true]], 654, 730);

      // ---- awesome panel
      const aFast = z6([[65,730,"o"],[100,760,"k"],[120,735],[150,720],[200,722,"m"],[280,722],[300,712,"k"],[340,705,"m"],[400,735],[450,738],[520,718,"k"],[620,712],[660,690,"m"],[700,700],[750,700,"k"],[790,670],[860,628,"m"],[900,645],[940,650],[1000,665],[1050,685,"k"],[1110,660],[1130,640,"m"],[1210,640,"k"],[1240,650,"m"],[1300,675],[1340,710],[1380,750],[1420,758,"k"],[1460,735],[1490,688,"m"],[1560,690,"k"]])
        .concat(z7([[60,685,"m"],[110,710,"k"],[160,710],[200,690],[260,690,"m"],[350,700],[450,700],[600,710,"k"],[660,690],[720,680],[830,665],[860,630],[940,590,"m"],[975,670],[1000,680],[1030,675,"k"],[1110,640,"m"],[1155,680,"k"],[1225,635,"m"],[1265,700],[1285,700,"k"],[1330,672,"m"],[1395,725,"k"],[1440,705],[1490,672],[1560,670,"m"]]));
      const aSlow = z6([[65,735,"o"],[100,765,"g"],[140,755],[200,740,"o"],[250,745,"g"],[340,738],[350,725,"o"],[440,738],[500,732,"g"],[540,728,"o"],[590,735,"g"],[660,708],[700,705,"o"],[735,708,"g"],[780,700],[820,670],[860,640],[950,640],[1000,635,"o"],[1090,650,"g"],[1170,615,"o"],[1250,625],[1340,660],[1400,710],[1460,735,"g"],[1520,695],[1560,705,"o"]])
        .concat(z7([[40,708,"g"],[110,700],[230,685,"o"],[400,705],[620,712],[660,705,"g"],[780,680],[830,665],[940,595,"o"],[1030,640,"g"],[1125,620,"o"],[1195,635,"g"],[1240,625,"o"],[1320,670,"g"],[1350,660,"o"],[1425,695,"g"],[1560,670]]));
      aFast.push([1118, 763]);
      aSlow.push([1118, 764]);
      // last colour code seen before a given x, to pick the histogram colour
      const codeAt = (a, x) => {
        let c = a[0][2];
        for (const p of a) {
          if (p[0] > x) break;
          c = p[2] || c;
        }
        return c;
      };
      let p3 = `<rect x="23" y="730" width="1547" height="67" fill="#fff"/>` + grid(730, 797);
      p3 += line(23, 730.5, 1570, 730.5, "#8ea2ad", 1.5);
      for (let i = 0; i < 210; i++) {
        const x = monthX(i);
        let f = interp(aFast, x);
        const s = interp(aSlow, x);
        p3 += line(x + 1.6, f, x + 1.6, s, s < f ? "#fbc8c8" : "#c8f0c8", 1.4);
        if (x < 250 && f > 772) f = 772 + (f - 772) * 1.8;
        const neg = f > 772;
        const col = neg ? (i % 3 === 1 ? "#108a8a" : "#e01818") : codeAt(aFast, x) === "m" ? "#f010e0" : "#1414d8";
        p3 += `<rect x="${x - 1.5}" y="${Math.min(f, 772)}" width="3.2" height="${Math.abs(f - 772)}" fill="${col}"/>`;
      }
      p3 += line(23, 772, 1120, 772, "#1818e8", 1.5);
      p3 += colored(aFast, { o: "#f49a10", k: "#10103a", m: "#a010c0" }, 2.2);
      p3 += colored(aSlow, { o: "#f49a10", g: "#60f060" }, 2.2);
      z6([[108,755],[1130,632],[1465,728]]).concat(z7([[160,708],[322,695],[408,708],[526,702],[628,712],[1475,683]])).forEach((t) => (p3 += triUp(t[0], t[1], "#18e8f0", 4)));
      z6([[897,643],[1145,630]]).concat(z7([[118,702],[262,687],[350,703],[466,700],[556,705],[948,595]])).forEach((t) => (p3 += triDown(t[0], t[1], "#e8e818", 4)));
      document.getElementById("p3").innerHTML = p3;
      document.getElementById("p3Axis").innerHTML = axisText(
        [[735,"30"],[745,"20"],[757,"8,7887","#e020c0",true],[764,"5,9699","#f49a10",true],[777,"0","#f020e0",true],[785,"-10"]], 730, 797);

      // ---- market strength bar
      const Y = "#fbfb80", G = "#33f033", S = "#aee8f8", I = "#6c6cc8", X = "#7a1010";
      const zones = [[65,245,Y],[245,258,G],[258,315,Y],[315,330,G],[330,465,Y],[465,492,G],[492,540,Y],[540,550,G],[550,622,Y],[622,670,G],[670,755,Y],[755,903,G],[903,1078,Y],[1078,1165,G],[1165,1195,Y],[1195,1210,G],[1210,1238,Y],[1238,1268,G],[1268,1310,Y],[1310,1385,G],[1385,1400,X],[1400,1412,I],[1412,1460,S],[1460,1500,I],[1500,1568,S]]
        .map((z) => [z[0] / 2.8, z[1] / 2.8, z[2]])
        .concat([[0,8,S],[8,108,Y],[108,125,G],[125,257,Y],[257,298,G],[298,373,Y],[373,398,G],[398,458,Y],[458,502,G],[502,516,Y],[516,546,G],[546,647,Y],[647,680,G],[680,750,Y],[750,808,G],[808,822,Y],[822,870,G],[870,882,X],[882,1012,I],[1012,1130,S],[1130,1162,I],[1162,1188,S],[1188,1245,I],[1245,1365,S],[1365,1378,I],[1378,1568,S]].map((z) => [560 + z[0] / 2.8, 560 + z[1] / 2.8, z[2]]));
      const strength = z6([[65,815],[130,812],[200,822],[260,832],[330,842],[460,855],[620,865],[750,868],[850,848],[900,838],[1000,845],[1078,865],[1130,840],[1240,838],[1380,825],[1420,812],[1490,805],[1560,825]])
        .concat(z7([[100,840],[250,850],[370,855],[460,857],[500,845],[550,845],[650,855],[800,852],[880,820],[1000,780],[1100,790],[1240,800],[1310,775],[1400,790],[1560,815]]));
      strength.push([1120, 812]);
      let p4 = `<rect x="23" y="797" width="1547" height="35" fill="#fff"/>` + grid(797, 832);
      for (const z of zones) {
        if (z[1] > z[0]) p4 += `<rect x="${z[0]}" y="798" width="${z[1] - z[0] + 0.5}" height="34" fill="${z[2]}"/>`;
      }
      p4 += `<rect x="1112" y="798" width="8" height="34" fill="${S}"/>`;
      p4 += `<rect x="23" y="815" width="1097" height="17" fill="#000" fill-opacity=".13"/>`;
      for (let i = 0; i < 210; i++) {
        const x = monthX(i);
        const zone = zones.find((z) => x >= z[0] && x < z[1]);
        const blue = zone && (zone[2] === G || zone[2] === I);
        const top = interp(strength, x);
        p4 += `<rect x="${x - 2.1}" y="${top}" width="4.2" height="${832 - top}" fill="${blue ? "#1818c8" : "#c83838"}" stroke="${blue ? "#10108a" : "#8a2424"}" stroke-width=".4"/>`;
      }
      p4 += line(23, 815, 1120, 815, "#111", 1) + line(23, 797.5, 1570, 797.5, "#8ea2ad", 1.5);
      document.getElementById("p4").innerHTML = p4;
      document.getElementById("p4Axis").innerHTML = axisText([[810,"0,5019","#e82020",true],[820,"0,5000","#222",true]], 797, 832);

      // ---- date axis
      let d = line(23, 832.5, 1570, 832.5, "#8ea2ad", 1.5) + line(1570.5, 832, 1570.5, 833, "#8ea2ad");
      for (let y = 2010; y <= 2033; y++) {
        d += line(yearX(y), 832, yearX(y), 835, "#555", 1);
        d += `<text x="${yearX(y)}" y="843" font-size="8" font-weight="700" text-anchor="middle" fill="#1a1a1a">${y}</text>`;
      }
      document.getElementById("dates").innerHTML = d;
    </script>
  </body>
</html>
